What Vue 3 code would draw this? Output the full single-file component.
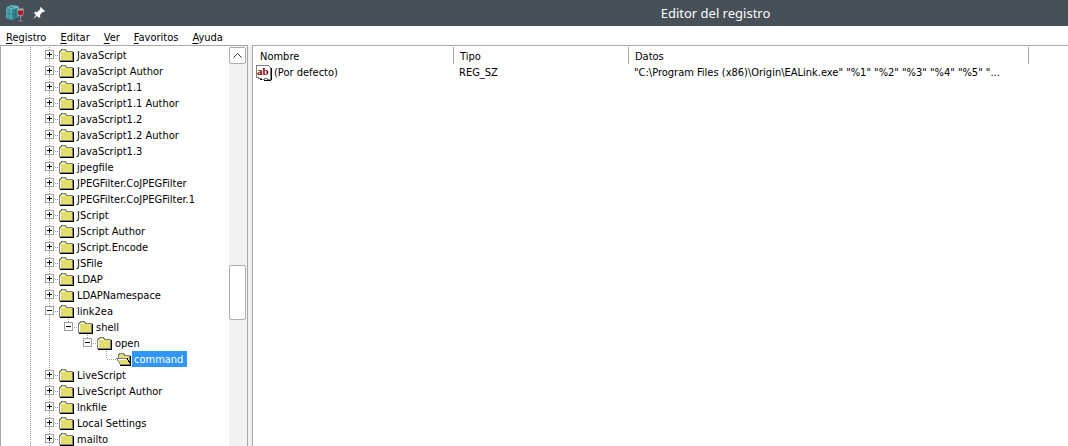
<script setup>
const items = [
  ['JavaScript', 0], ['JavaScript Author', 0], ['JavaScript1.1', 0], ['JavaScript1.1 Author', 0],
  ['JavaScript1.2', 0], ['JavaScript1.2 Author', 0], ['JavaScript1.3', 0], ['jpegfile', 0],
  ['JPEGFilter.CoJPEGFilter', 0], ['JPEGFilter.CoJPEGFilter.1', 0], ['JScript', 0],
  ['JScript Author', 0], ['JScript.Encode', 0], ['JSFile', 0], ['LDAP', 0], ['LDAPNamespace', 0],
  ['link2ea', 0, 'minus'], ['shell', 1, 'minus'], ['open', 2, 'minus'], ['command', 3, 'leaf'],
  ['LiveScript', 0], ['LiveScript Author', 0], ['lnkfile', 0], ['Local Settings', 0], ['mailto', 0],
].map(([name, depth, kind = 'plus']) => ({ name, depth, kind }))
const menus = [['R', 'egistro'], ['E', 'ditar'], ['V', 'er'], ['F', 'avoritos'], ['A', 'yuda']]
</script>

<template>
  <div class="window">
    <header class="titlebar">
      <svg class="appicon" width="20" height="20" viewBox="0 0 20 20" aria-hidden="true">
        <path d="M1 5 6 2l7 1 1 2v9l-7 3-6-2z" fill="#2f8593" />
        <path d="M1 5 6 2l7 1 1 1.500-7 2z" fill="#6dbcc6" />
        <path d="M1 5l6 1.500V17l-6-2z" fill="#4aa5b3" />
        <path d="M1 10l6 1.500 6-2M4 6v9.500M10.500 6v9M4 3.500l6 2M9 2.500l-5 3" fill="none" stroke="#246370" stroke-width=".5" />
        <path d="M12.500 5.500h6v5q-.5 3-3 3t-3-3z" fill="#b9adb0" />
        <path d="M13 7.500h5v3q-.5 2-2.500 2t-2.500-2z" fill="#b4161f" />
        <path d="M15.500 13v4M13 18h5" stroke="#9b7e82" />
      </svg>
      <svg class="pin" width="14" height="14" viewBox="0 0 14 14" aria-hidden="true">
        <path d="M8.500 1 13 5l-1 1-1-.3-3 3 .3 2-1.300 1.300L5 10l-4 3 3-4-2-2 1.300-1.300 2 .3 3-3L8 2z" fill="#fcfcfc" />
      </svg>
      <h1>Editor del registro</h1>
    </header>
    <nav class="menubar">
      <button v-for="m in menus" :key="m[1]" type="button"><u>{{ m[0] }}</u>{{ m[1] }}</button>
    </nav>
    <main class="panes">
      <section class="treepane">
        <ul class="tree">
          <li v-for="item in items" :key="item.name" :class="['d' + item.depth, item.kind]">
            <i v-if="item.depth" class="riser"></i>
            <button v-if="item.kind !== 'leaf'" type="button" class="toggle" :aria-label="item.name">
              <svg width="9" height="9" viewBox="0 0 9 9" shape-rendering="crispEdges">
                <path d="M.5.5h8v8h-8z" fill="#fff" stroke="#a0a0a0" />
                <path :d="item.kind === 'plus' ? 'M2 4.500h5M4.500 2v5' : 'M2 4.500h5'" stroke="#000" />
              </svg>
            </button>
            <i class="branch"></i>
            <svg class="folder" width="16" height="14" viewBox="0 0 16 14" shape-rendering="crispEdges">
              <defs>
                <pattern id="dither" width="2" height="2" patternUnits="userSpaceOnUse">
                  <path d="M0 0h2v2h-2z" fill="#f4f000" /><path d="M0 0h1v1h-1zM1 1h1v1h-1z" fill="#d0d0d0" />
                </pattern>
              </defs>
              <template v-if="item.kind === 'leaf'">
                <path d="M2.500 6.500v-4h1v-1h4v1h1v1h5v9h-9z" fill="url(#dither)" stroke="#808080" />
                <path d="M.5 6.500h10l1 1 3 5h-10z" fill="url(#dither)" stroke="#808080" />
                <path d="M2 7.500h8" stroke="#fff" />
                <path d="M4 13.500h11M14.500 4v9M11 6l4 7" fill="none" stroke="#000" />
              </template>
              <template v-else>
                <path d="M1 3h1v-1h1v-1h4v1h1v1h6v9H1z" fill="#fff" />
                <path d="M2 4h11v8H2zM3 2h4v1H3z" fill="url(#dither)" />
                <path d="M.5 12.500v-9h1v-1h1v-1h4v1h1v1h6v9z" fill="none" stroke="#808080" />
                <path d="M1 13.500h14M14.500 4v10" fill="none" stroke="#000" />
              </template>
            </svg>
            <span class="label">{{ item.name }}</span>
          </li>
        </ul>
        <div class="scroll">
          <button type="button" aria-label="Subir"><svg width="9" height="5" viewBox="0 0 9 5"><path d="M.5 4.500l4-4 4 4" fill="none" stroke="#333" /></svg></button>
          <div class="thumb"></div>
        </div>
      </section>
      <section class="listpane">
        <table>
          <colgroup><col class="c1" /><col class="c2" /><col class="c3" /><col /></colgroup>
          <thead><tr><th>Nombre</th><th>Tipo</th><th>Datos</th><td></td></tr></thead>
          <tbody><tr>
            <td><span class="name"><svg width="16" height="16" viewBox="0 0 16 16" shape-rendering="crispEdges" aria-hidden="true">
              <path d="M.5.5h12l2 2v12h-3v-1h-3v1h-3v-1h-3v-1h-2z" fill="#fff" stroke="#808080" />
              <path d="M15.500 3v12M4 14.500h2M8 15.500h7" stroke="#000" fill="none" />
              <text x="1" y="10">ab</text>
            </svg>(Por defecto)</span></td>
            <td>REG_SZ</td>
            <td>"C:\Program Files (x86)\Origin\EALink.exe" "%1" "%2" "%3" "%4" "%5" "...</td><td></td>
          </tr></tbody>
        </table>
      </section>
    </main>
  </div>
</template>

<style>
html, body { margin: 0; height: 100%; overflow: hidden; }
#app { height: 100%; }
</style>
<style scoped>
.window { height: 100vh; display: flex; flex-direction: column; background: #fff; color: #000; font: 11px/16px "DejaVu Sans Condensed", "DejaVu Sans", sans-serif; font-stretch: condensed; }
button { font: inherit; color: inherit; background: none; border: 0; padding: 0; margin: 0; }
.titlebar { flex: none; height: 26px; display: flex; align-items: center; background: #475057; color: #fcfcfc; padding-left: 5px; }
.pin { margin-left: 7px; }
h1 { flex: 1; margin: 0; padding-left: 317px; text-align: center; font: 400 13px/18px "Noto Sans", sans-serif; }
.menubar { flex: none; height: 19px; box-sizing: border-box; display: flex; align-items: center; gap: 14px; padding: 4px 0 0 6px; }
.menubar u { text-underline-offset: 2px; }
.panes { flex: 1; min-height: 0; display: flex; gap: 4px; background: #f0f0f0; }
.treepane { flex: none; width: 246px; display: flex; border: 1px solid #a8a8a8; border-bottom: 0; background: #fff; }
.tree { flex: 1; margin: 0; padding: 1px 0 0 29px; list-style: none; overflow: hidden; }
.tree li { position: relative; height: 16px; display: flex; align-items: center; padding-left: 15px; }
.tree li::before, .tree li::after { content: ""; position: absolute; left: 0; top: 0; width: 1px; height: 16px; background: repeating-linear-gradient(#a0a0a0 0 1px, #fff 1px 2px); }
.tree li::after { left: 19px; }
.tree .d1 { padding-left: 34px; }
.tree .d2 { padding-left: 53px; }
.tree .d3 { padding-left: 76px; }
.riser { position: absolute; top: 0; left: 38px; width: 1px; height: 8px; background: repeating-linear-gradient(#a0a0a0 0 1px, #fff 1px 2px); }
.d2 .riser { left: 57px; }
.d3 .riser { left: 76px; }
.toggle { position: relative; z-index: 1; display: flex; width: 9px; padding-bottom: 1px; }
.branch { width: 5px; height: 1px; background: repeating-linear-gradient(90deg, #fff 0 1px, #a0a0a0 1px 2px); }
.folder { flex: none; }
.label { margin-left: 1px; padding: 2px 1px 0; line-height: 14px; white-space: nowrap; }
.leaf .branch { width: 10px; }
.leaf .label { background: #3096fa; color: #fff; margin-left: 0; padding: 2px 4px 0 2px; }
.scroll { flex: none; width: 18px; background: #f2f2f2; display: flex; flex-direction: column; }
.scroll button { width: 17px; height: 17px; margin-top: 1px; box-sizing: border-box; display: flex; align-items: center; justify-content: center; background: #fff; border: 1px solid #adadad; border-radius: 2px; }
.thumb { width: 17px; margin-top: 201px; height: 55px; box-sizing: border-box; background: #fff; border: 1px solid #adadad; border-radius: 2px; }
.listpane { flex: 1; min-width: 0; border: 1px solid #a8a8a8; border-width: 1px 0 0 1px; background: #fff; overflow: hidden; }
table { width: 100%; table-layout: fixed; border-collapse: separate; border-spacing: 0; margin-top: 1px; }
.c1 { width: 201px; }
.c2 { width: 175px; }
.c3 { width: 400px; }
th { height: 15px; line-height: 15px; padding: 2px 0 0 6px; border-right: 1px solid #a8a8a8; text-align: left; font-weight: 400; }
th:first-child { padding-left: 7px; }
tbody td { padding: 1px 0 0 5px; white-space: nowrap; }
tbody td:first-child { padding-left: 3px; }
.name { display: flex; align-items: center; gap: 2px; }
text { font: bold 11px "Liberation Serif", serif; fill: #800000; }
</style>
